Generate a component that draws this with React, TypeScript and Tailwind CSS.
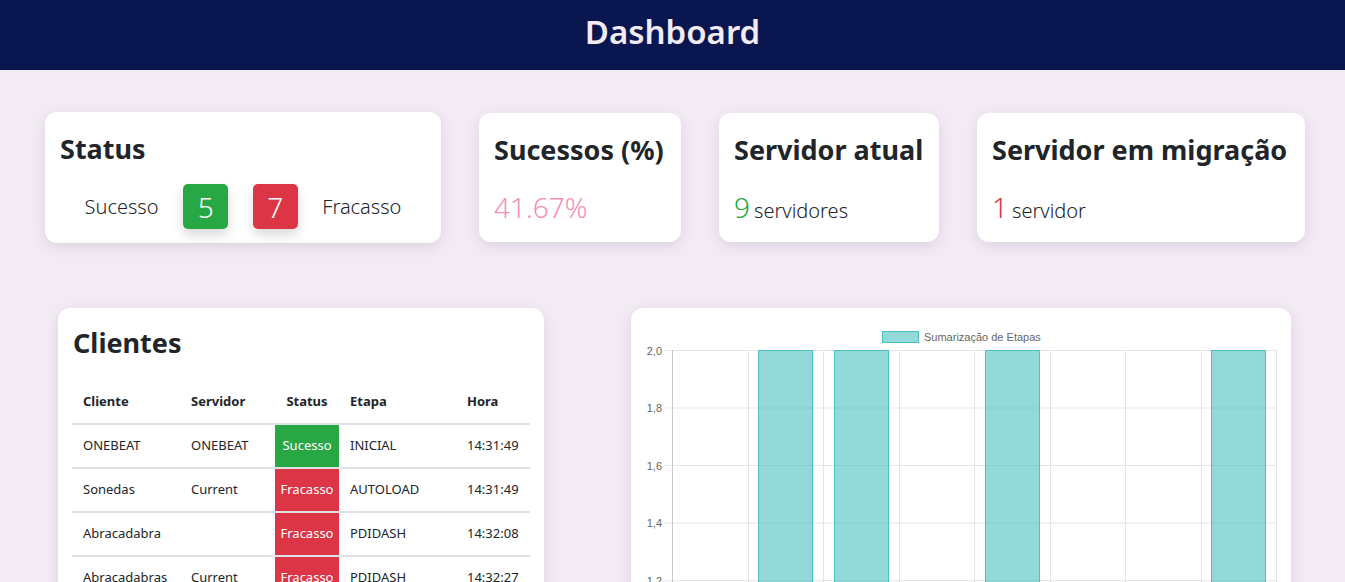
import React from "react";

interface Row {
	cliente: string;
	servidor: string;
	ok: boolean;
	etapa: string;
	hora: string;
}

const rows: Row[] = [
	{ cliente: "ONEBEAT", servidor: "ONEBEAT", ok: true, etapa: "INICIAL", hora: "14:31:49" },
	{ cliente: "Sonedas", servidor: "Current", ok: false, etapa: "AUTOLOAD", hora: "14:31:49" },
	{ cliente: "Abracadabra", servidor: "", ok: false, etapa: "PDIDASH", hora: "14:32:08" },
	{ cliente: "Abracadabras", servidor: "Current", ok: false, etapa: "PDIDASH", hora: "14:32:27" },
];

const font = { fontFamily: '"Noto Sans", "Open Sans", sans-serif' };

const Card = ({ className, children }: { className: string; children: React.ReactNode }) => (
	<div className={`rounded-xl bg-white shadow-[0_4px_14px_rgba(60,30,80,0.12)] ${className}`}>{children}</div>
);

const Chart = () => {
	const x0 = 41;
	const step = 75.5;
	const ys = [2.0, 1.8, 1.6, 1.4, 1.2, 1.0];
	const bars = [1, 2, 4, 7];
	return (
		<svg width="660" height="360" className="block">
			<rect x="251.5" y="23.5" width="36" height="11" fill="rgba(75,192,192,0.6)" stroke="rgb(75,192,192)" />
			<text x="293" y="33" fontSize="11" fill="#666" fontFamily="Liberation Sans, Arial, sans-serif">
				Sumarização de Etapas
			</text>
			{ys.map((v, i) => {
				const y = 42.5 + i * 57.5;
				return (
					<g key={v}>
						<line x1="34" x2="645" y1={y} y2={y} stroke="#e5e5e5" />
						<text x="31" y={y + 4} fontSize="11" fill="#666" textAnchor="end" fontFamily="Liberation Sans, Arial, sans-serif">
							{v.toFixed(1).replace(".", ",")}
						</text>
					</g>
				);
			})}
			{Array.from({ length: 9 }).map((_, i) => {
				const x = Math.round(x0 + i * step) + 0.5;
				return <line key={i} x1={x} x2={x} y1="42" y2="340" stroke={i === 0 ? "#c8c8c8" : "#e5e5e5"} />;
			})}
			{bars.map((c) => {
				const x = Math.round(x0 + c * step + 10.5) + 0.5;
				return (
					<g key={c}>
						<rect x={x} y="42.5" width="54" height="300" fill="rgba(75,192,192,0.6)" />
						<path d={`M${x} 342V42.5H${x + 54}V342`} fill="none" stroke="rgb(75,192,192)" />
					</g>
				);
			})}
		</svg>
	);
};

export default function App() {
	return (
		<div className="min-h-screen bg-[#f3ebf4] text-[#212529]" style={font}>
			<header className="flex h-[70px] items-center justify-center bg-[#09164f] pb-[6px]">
				<h1 className="text-[33px] font-semibold text-[#f3ebf4]">Dashboard</h1>
			</header>

			<div className="flex items-center gap-[38px] pl-[45px] pt-[42px]">
				<Card className="h-[131px] w-[396px] px-[15px] pt-[20px]">
					<h3 className="text-[27px] leading-[34px] font-bold">Status</h3>
					<div className="mt-[18px] flex items-center justify-evenly">
						<span className="text-[20px] font-light">Sucesso</span>
						<div className="flex h-[45px] w-[45px] items-center justify-center rounded-[5px] bg-[#28a745] text-[28px] font-light text-white shadow-[0_6px_12px_rgba(0,0,0,0.15)]">
							5
						</div>
						<div className="flex h-[45px] w-[45px] items-center justify-center rounded-[5px] bg-[#dc3545] text-[28px] font-light text-white shadow-[0_6px_12px_rgba(0,0,0,0.15)]">
							7
						</div>
						<span className="text-[20px] font-light">Fracasso</span>
					</div>
				</Card>
				<Card className="h-[129px] w-[202px] px-[15px] pt-[20px]">
					<h3 className="text-[27px] leading-[34px] font-bold">Sucessos (%)</h3>
					<div className="mt-[19px] text-[28px] font-light text-[#f48fb5]">41.67%</div>
				</Card>
				<Card className="h-[129px] w-[220px] px-[15px] pt-[20px]">
					<h3 className="text-[27px] leading-[34px] font-bold">Servidor atual</h3>
					<div className="mt-[19px] font-light">
						<span className="text-[28px] text-[#28a745]">9</span>
						<span className="ml-[4px] text-[20px]">servidores</span>
					</div>
				</Card>
				<Card className="h-[129px] w-[328px] px-[15px] pt-[20px]">
					<h3 className="text-[27px] leading-[34px] font-bold">Servidor em migração</h3>
					<div className="mt-[19px] font-light">
						<span className="text-[28px] text-[#dc3545]">1</span>
						<span className="ml-[4px] text-[20px]">servidor</span>
					</div>
				</Card>
			</div>

			<div className="flex items-start pt-[65px]">
				<Card className="ml-[58px] w-[486px] px-[14px] pt-[18px] pb-4">
					<h3 className="px-[1px] text-[27px] leading-[34px] font-bold">Clientes</h3>
					<table className="mt-[20px] w-[458px] table-fixed border-collapse text-[13px]">
						<colgroup>
							<col className="w-[108px]" />
							<col className="w-[95px]" />
							<col className="w-[64px]" />
							<col className="w-[117px]" />
							<col className="w-[74px]" />
						</colgroup>
						<thead>
							<tr className="h-[44px] border-b-2 border-[#dee2e6] text-left font-bold">
								<th className="px-[11px]">Cliente</th>
								<th className="px-[11px]">Servidor</th>
								<th className="px-0 text-center">Status</th>
								<th className="px-[11px]">Etapa</th>
								<th className="px-[11px]">Hora</th>
							</tr>
						</thead>
						<tbody>
							{rows.map((r, i) => (
								<tr key={i} className="h-[44px] border-b-2 border-[#dee2e6]">
									<td className="px-[11px]">{r.cliente}</td>
									<td className="px-[11px]">{r.servidor}</td>
									<td className={`px-0 text-center text-white ${r.ok ? "bg-[#28a745]" : "bg-[#dc3545]"}`}>
										{r.ok ? "Sucesso" : "Fracasso"}
									</td>
									<td className="px-[11px]">{r.etapa}</td>
									<td className="px-[11px]">{r.hora}</td>
								</tr>
							))}
						</tbody>
					</table>
				</Card>
				<Card className="ml-[87px] w-[660px] pb-4">
					<Chart />
				</Card>
			</div>
		</div>
	);
}
